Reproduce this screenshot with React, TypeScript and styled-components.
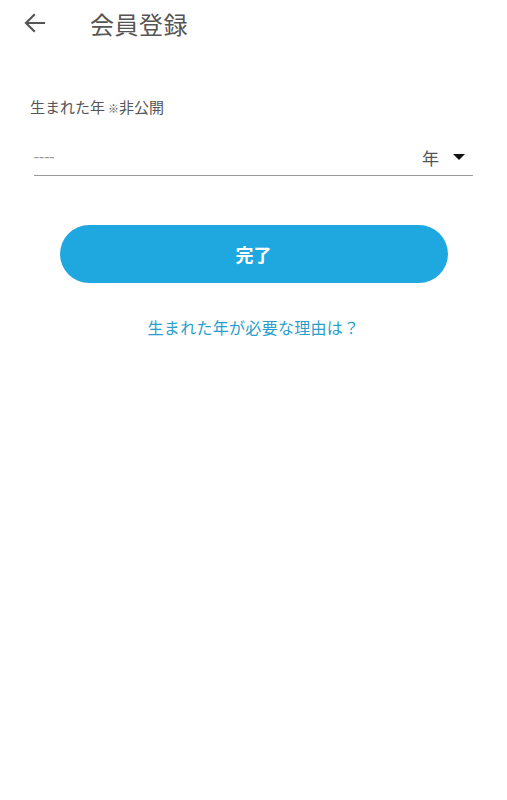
import styled, { createGlobalStyle } from "styled-components";

const GlobalStyle = createGlobalStyle`
  html, body {
    margin: 0;
    padding: 0;
    background: #ffffff;
  }
  body {
    font-family: Roboto, "Noto Sans CJK JP", sans-serif;
  }
`;

const Page = styled.div`
  width: 100%;
  min-height: 800px;
  background: #ffffff;
`;

const Header = styled.header`
  height: 46px;
  display: flex;
  align-items: center;
  padding-left: 22px;
`;

const BackButton = styled.button`
  width: 26px;
  height: 26px;
  padding: 0;
  border: none;
  background: none;
  display: flex;
  align-items: center;
  justify-content: center;
  cursor: pointer;
`;

const Title = styled.h1`
  margin: 0 0 0 42px;
  font-size: 24px;
  font-weight: 400;
  color: #555555;
  letter-spacing: 0.5px;
`;

const Form = styled.div`
  padding: 50px 34px 0 30px;
`;

const Label = styled.div`
  font-size: 15px;
  color: #555555;
  line-height: 24px;
  span {
    margin-left: 3px;
  }
  small {
    font-size: 11px;
  }
`;

const SelectRow = styled.div`
  margin: 15px 0 0 4px;
  height: 36px;
  display: flex;
  align-items: center;
  border-bottom: 1px solid #9a9a9a;
  padding-top: 2px;
`;

const Placeholder = styled.div`
  flex: 1;
  font-size: 17px;
  color: #9a9a9a;
  letter-spacing: 0.5px;
`;

const Unit = styled.div`
  font-size: 17px;
  color: #555555;
  margin-right: 14px;
`;

const Caret = styled.div`
  width: 0;
  height: 0;
  border-left: 6px solid transparent;
  border-right: 6px solid transparent;
  border-top: 6px solid #111111;
  margin-right: 8px;
`;

const Actions = styled.div`
  display: flex;
  flex-direction: column;
  align-items: center;
  padding-top: 49px;
`;

const SubmitButton = styled.button`
  width: 388px;
  height: 58px;
  border: none;
  border-radius: 29px;
  background: #1ea8df;
  color: #ffffff;
  font-family: Roboto, "Noto Sans CJK JP", sans-serif;
  font-size: 18px;
  font-weight: 700;
  cursor: pointer;
`;

const ReasonLink = styled.a`
  margin-top: 32px;
  font-size: 16px;
  color: #2a9fcc;
  text-decoration: none;
  letter-spacing: 0.3px;
  cursor: pointer;
`;

export default function App() {
  return (
    <Page>
      <GlobalStyle />
      <Header>
        <BackButton aria-label="戻る">
          <svg width="24" height="24" viewBox="0 0 24 24" fill="none">
            <path
              d="M21 12H3.5M11 4l-8 8 8 8"
              stroke="#555555"
              strokeWidth="2.2"
              strokeLinecap="square"
            />
          </svg>
        </BackButton>
        <Title>会員登録</Title>
      </Header>
      <Form>
        <Label>
          生まれた年
          <span>
            <small>※</small>非公開
          </span>
        </Label>
        <SelectRow>
          <Placeholder>----</Placeholder>
          <Unit>年</Unit>
          <Caret />
        </SelectRow>
      </Form>
      <Actions>
        <SubmitButton>完了</SubmitButton>
        <ReasonLink>生まれた年が必要な理由は？</ReasonLink>
      </Actions>
    </Page>
  );
}
